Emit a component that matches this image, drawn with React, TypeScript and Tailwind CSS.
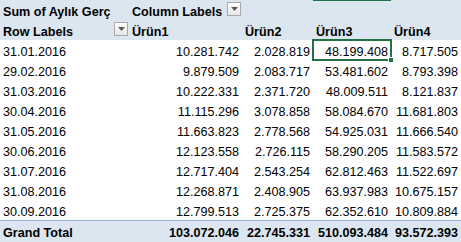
import React from 'react';

type Row = [string, string, string, string, string];

const rows: Row[] = [
  ['31.01.2016', '10.281.742', '2.028.819', '48.199.408', '8.717.505'],
  ['29.02.2016', '9.879.509', '2.083.717', '53.481.602', '8.793.398'],
  ['31.03.2016', '10.222.331', '2.371.720', '48.009.511', '8.121.837'],
  ['30.04.2016', '11.115.296', '3.078.858', '58.084.670', '11.681.803'],
  ['31.05.2016', '11.663.823', '2.778.568', '54.925.031', '11.666.540'],
  ['30.06.2016', '12.123.558', '2.726.115', '58.290.205', '11.583.572'],
  ['31.07.2016', '12.717.404', '2.543.254', '62.812.463', '11.522.697'],
  ['31.08.2016', '12.268.871', '2.408.905', '63.937.983', '10.675.157'],
  ['30.09.2016', '12.799.513', '2.725.375', '62.352.610', '10.809.884'],
];

const totals = ['103.072.046', '22.745.331', '510.093.484', '93.572.393'];

// small filter button used on the pivot labels
const FilterButton = () => (
  <span className="absolute right-[1px] top-[2px] flex h-[14px] w-[14px] items-center justify-center border border-[#a9a9a9] bg-gradient-to-b from-white to-[#e6e6e6]">
    <svg width="7" height="4" viewBox="0 0 7 4">
      <path d="M0 0 H7 L3.5 4 Z" fill="#5a5a5a" />
    </svg>
  </span>
);

const cell = 'h-[20px] px-[3px] pt-[4px] leading-[16px] whitespace-nowrap';

export default function App() {
  return (
    <div className="h-[242px] w-[461px] overflow-hidden bg-white font-['Liberation_Sans',Arial,sans-serif] text-[12.6px] text-black">
      <div className="grid grid-cols-[129px_113px_71px_78px_70px]">
        {/* header row 1 */}
        <div className={`${cell} bg-[#dce6f1] font-bold`}>Sum of Aylık Gerç</div>
        <div className={`${cell} relative bg-[#dce6f1] font-bold`}>
          Column Labels
          <FilterButton />
        </div>
        <div className={`${cell} bg-[#dce6f1]`} />
        <div className={`${cell} border-t border-[#217346] bg-[#dce6f1]`} />
        <div className={`${cell} bg-[#dce6f1]`} />

        {/* header row 2 */}
        <div className={`${cell} relative bg-[#dce6f1] font-bold`}>
          Row Labels
          <FilterButton />
        </div>
        <div className={`${cell} bg-[#dce6f1] font-bold`}>Ürün1</div>
        <div className={`${cell} bg-[#dce6f1] font-bold`}>Ürün2</div>
        <div className={`${cell} bg-[#dce6f1] font-bold`}>Ürün3</div>
        <div className={`${cell} bg-[#dce6f1] font-bold`}>Ürün4</div>

        {rows.map((r, i) => (
          <React.Fragment key={r[0]}>
            <div className={cell}>{r[0]}</div>
            <div className={`${cell} text-right`}>{r[1]}</div>
            <div className={`${cell} text-right`}>{r[2]}</div>
            <div className={`${cell} relative text-right`}>
              {r[3]}
              {i === 0 && (
                <span className="absolute -inset-[1px] border-2 border-[#217346]">
                  <span className="absolute -bottom-[4px] -right-[4px] h-[6px] w-[6px] border border-white bg-[#217346]" />
                </span>
              )}
            </div>
            <div className={`${cell} text-right`}>{r[4]}</div>
          </React.Fragment>
        ))}

        {/* grand total */}
        <div className={`${cell} h-[22px] border-t border-[#95b3d7] bg-[#dce6f1] font-bold`}>Grand Total</div>
        {totals.map((t) => (
          <div key={t} className={`${cell} h-[22px] border-t border-[#95b3d7] bg-[#dce6f1] text-right font-bold`}>
            {t}
          </div>
        ))}
      </div>
    </div>
  );
}
